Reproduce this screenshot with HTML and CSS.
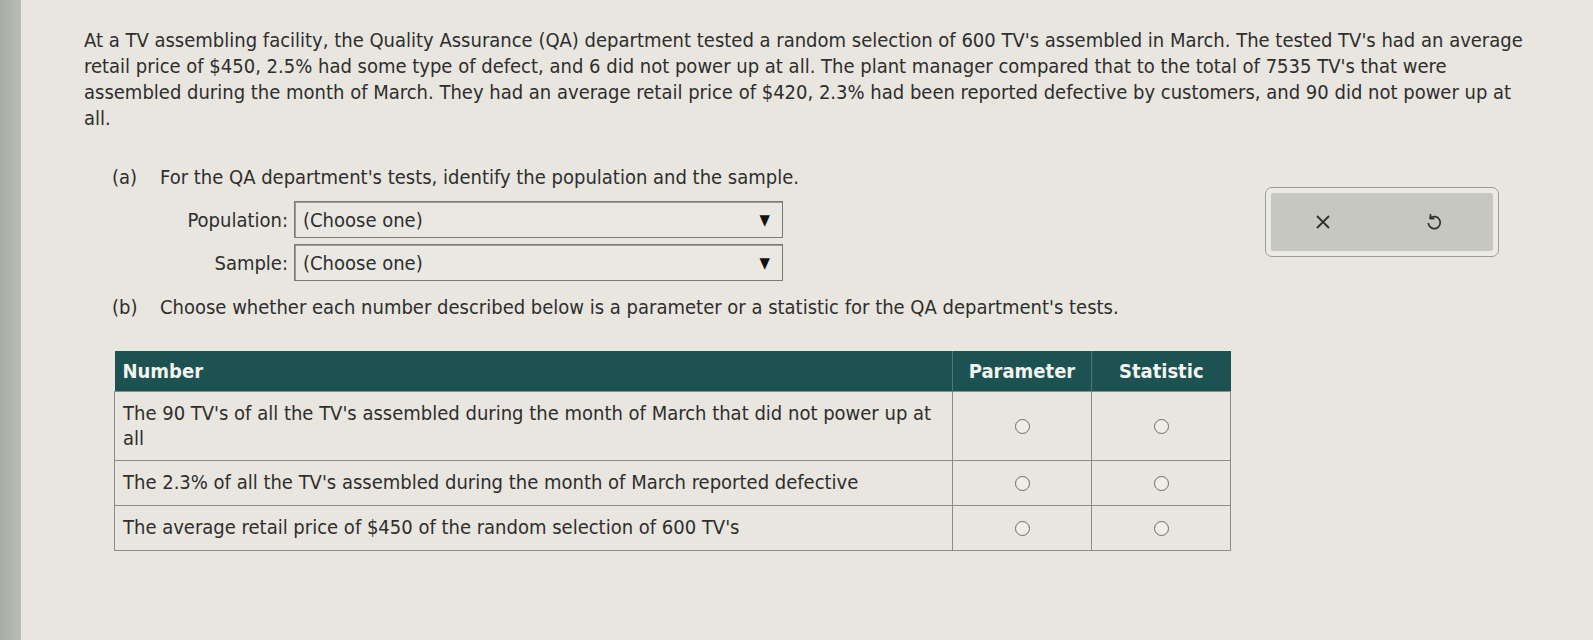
FILE: index.html
```html
<!DOCTYPE html>
<html lang="en">
<head>
<meta charset="utf-8">
<title>QA department question</title>
<link rel="stylesheet" href="styles.css">
</head>
<body>
<div class="page">
  <div class="edge"></div>
  <main class="content">
    <p class="intro">At a TV assembling facility, the Quality Assurance (QA) department tested a random selection of 600 TV's assembled in March. The tested TV's had an average retail price of $450, 2.5% had some type of defect, and 6 did not power up at all. The plant manager compared that to the total of 7535 TV's that were assembled during the month of March. They had an average retail price of $420, 2.3% had been reported defective by customers, and 90 did not power up at all.</p>

    <div class="row-a">
      <section class="part">
        <div class="part-head"><span class="part-label">(a)</span><span>For the QA department's tests, identify the population and the sample.</span></div>
        <div class="fields">
          <div class="field">
            <span class="field-label">Population:</span>
            <div class="select"><span>(Choose one)</span><span class="arrow">&#9660;</span></div>
          </div>
          <div class="field">
            <span class="field-label">Sample:</span>
            <div class="select"><span>(Choose one)</span><span class="arrow">&#9660;</span></div>
          </div>
        </div>
      </section>
      <div class="tools">
        <div class="tools-inner">
          <svg class="icon" width="18" height="18" viewBox="0 0 18 18"><path d="M3 3 L15 15 M15 3 L3 15" stroke="#2f2f2f" stroke-width="1.8" fill="none"/></svg>
          <svg class="icon" width="18" height="20" viewBox="0 0 18 20"><path d="M5.2 6.2 A6 6 0 1 1 3.3 11" stroke="#2f2f2f" stroke-width="1.7" fill="none"/><path d="M5.6 2.2 L5.2 6.4 L9.4 6.6" stroke="#2f2f2f" stroke-width="1.7" fill="none" stroke-linejoin="miter"/></svg>
        </div>
      </div>
    </div>

    <section class="part part-b">
      <div class="part-head"><span class="part-label">(b)</span><span>Choose whether each number described below is a parameter or a statistic for the QA department's tests.</span></div>
    </section>

    <table class="grid">
      <thead>
        <tr><th class="col-num">Number</th><th class="col-opt">Parameter</th><th class="col-opt">Statistic</th></tr>
      </thead>
      <tbody>
        <tr class="tall"><td>The 90 TV's of all the TV's assembled during the month of March that did not power up at all</td><td class="radio-cell"><span class="radio"></span></td><td class="radio-cell"><span class="radio"></span></td></tr>
        <tr><td>The 2.3% of all the TV's assembled during the month of March reported defective</td><td class="radio-cell"><span class="radio"></span></td><td class="radio-cell"><span class="radio"></span></td></tr>
        <tr><td>The average retail price of $450 of the random selection of 600 TV's</td><td class="radio-cell"><span class="radio"></span></td><td class="radio-cell"><span class="radio"></span></td></tr>
      </tbody>
    </table>
  </main>
</div>
</body>
</html>
```

FILE: styles.css
```css
* { box-sizing: border-box; }
html, body { margin: 0; height: 100%; }
body {
  background: #e8e6df;
  font-family: "DejaVu Sans", Verdana, sans-serif;
  font-stretch: condensed;
  color: #2e2e2e;
  font-size: 20px;
}
.page {
  display: flex;
  min-height: 640px;
}
.edge {
  width: 21px;
  flex: none;
  background: linear-gradient(to right, #a8aca5, #b9bcb5);
}
.content {
  flex: 1;
  padding: 27px 0 0 63px;
}
.intro {
  margin: 0;
  width: 1445px;
  line-height: 26px;
}
.row-a {
  display: flex;
  align-items: flex-start;
  width: 1415px;
  margin-top: 34px;
}
.part {
  padding-left: 28px;
}
.part-head {
  display: flex;
  gap: 18px;
  line-height: 24px;
}
.part-label { width: 30px; }
.fields {
  display: flex;
  flex-direction: column;
  gap: 6px;
  margin-top: 12px;
}
.field {
  display: flex;
  align-items: center;
  gap: 6px;
}
.field-label {
  width: 176px;
  text-align: right;
}
.select {
  width: 489px;
  height: 37px;
  border: 1px solid #7a7a76;
  box-shadow: inset 1px 1px 0 #9a9a96;
  background: #e9e8e2;
  display: flex;
  align-items: center;
  justify-content: space-between;
  padding: 0 12px 0 8px;
}
.arrow {
  font-size: 15px;
  color: #111;
}
.tools {
  margin-left: auto;
  margin-top: 22px;
  width: 234px;
  height: 70px;
  border: 1.5px solid #9c9c98;
  border-radius: 7px;
  padding: 5px;
  background: #eceae4;
}
.tools-inner {
  height: 100%;
  background: #c6c7bf;
  border-radius: 2px;
  display: flex;
  align-items: center;
  gap: 93px;
  padding-left: 43px;
}
.part-b { margin-top: 14px; }
.grid {
  margin: 32px 0 0 30px;
  border-collapse: collapse;
  width: 1117px;
  font-size: 20px;
}
.grid th {
  background: #1d5253;
  color: #f4f4f0;
  font-weight: bold;
  height: 40px;
  padding: 0 8px;
  text-align: left;
  border-left: 1px solid #4a7778;
}
.grid th.col-opt { text-align: center; width: 139px; }
.grid th:first-child { border-left: none; }
.grid td {
  border: 1px solid #8c8c87;
  padding: 6px 8px;
  line-height: 25px;
  height: 45px;
  vertical-align: middle;
}
.grid tr.tall td { height: 69px; }
.radio-cell { text-align: center; }
.radio {
  display: inline-block;
  width: 15px;
  height: 15px;
  border: 1.5px solid #6b6b68;
  border-radius: 50%;
  vertical-align: middle;
  background: #eeede8;
}
```
